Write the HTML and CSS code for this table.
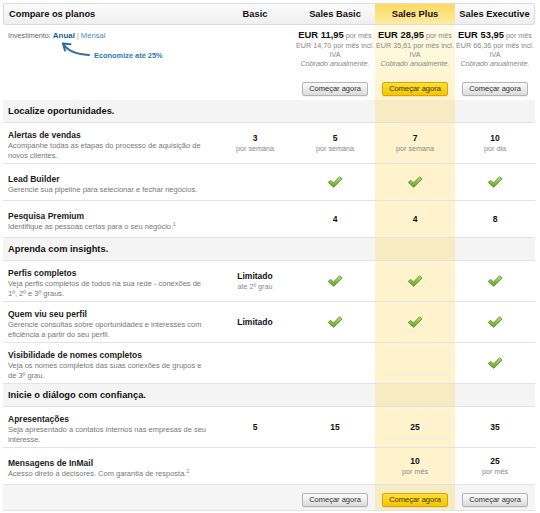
FILE: index.html
```html
<!DOCTYPE html>
<html>
<head>
<meta charset="utf-8">
<title>Compare os planos</title>
<link rel="stylesheet" href="styles.css">
</head>
<body>
<table class="plans">
  <colgroup>
    <col class="col-feature">
    <col class="col-plan">
    <col class="col-plan">
    <col class="col-plan">
    <col class="col-plan">
  </colgroup>
  <thead>
    <tr class="head-row">
      <th class="feature-head">Compare os planos</th>
      <th>Basic</th>
      <th>Sales Basic</th>
      <th class="featured">Sales Plus</th>
      <th class="last">Sales Executive</th>
    </tr>
  </thead>
  <tbody>
    <tr class="price-row">
      <td class="invest">
        <div class="billing">Investimento: <a class="current">Anual</a> <span class="sep">|</span> <a>Mensal</a></div>
        <div class="saving">
          <svg class="arrow" width="36" height="18" viewBox="0 0 36 18"><path d="M5 2.5 Q11 13 31 14" fill="none" stroke="#2b6ea6" stroke-width="2" stroke-linecap="round"/><path d="M12.5 3.2 L5 2.5 L7 9.5" fill="none" stroke="#2b6ea6" stroke-width="2" stroke-linecap="round" stroke-linejoin="round"/></svg>
          <span>Economize até 25%</span>
        </div>
      </td>
      <td></td>
      <td>
        <div class="price"><strong>EUR 11,95</strong> por mês</div>
        <div class="tax">EUR 14,70 por mês incl.<br>IVA</div>
        <div class="billed">Cobrado anualmente.</div>
        <button class="btn">Começar agora</button>
      </td>
      <td class="featured">
        <div class="price"><strong>EUR 28,95</strong> por mês</div>
        <div class="tax">EUR 35,61 por mês incl.<br>IVA</div>
        <div class="billed">Cobrado anualmente.</div>
        <button class="btn btn-primary">Começar agora</button>
      </td>
      <td>
        <div class="price"><strong>EUR 53,95</strong> por mês</div>
        <div class="tax">EUR 66,36 por mês incl.<br>IVA</div>
        <div class="billed">Cobrado anualmente.</div>
        <button class="btn">Começar agora</button>
      </td>
    </tr>

    <tr class="section">
      <td>Localize oportunidades.</td><td></td><td></td><td class="featured"></td><td></td>
    </tr>
    <tr class="feature">
      <td class="name">
        <div class="title">Alertas de vendas</div>
        <div class="desc">Acompanhe todas as etapas do processo de aquisição de<br>novos clientes.</div>
      </td>
      <td><div class="value">3</div><div class="unit">por semana</div></td>
      <td><div class="value">5</div><div class="unit">por semana</div></td>
      <td class="featured"><div class="value">7</div><div class="unit">por semana</div></td>
      <td><div class="value">10</div><div class="unit">por dia</div></td>
    </tr>
    <tr class="feature">
      <td class="name">
        <div class="title">Lead Builder</div>
        <div class="desc">Gerencie sua pipeline para selecionar e fechar negócios.</div>
      </td>
      <td></td>
      <td><svg class="check"><use href="#check"/></svg></td>
      <td class="featured"><svg class="check"><use href="#check"/></svg></td>
      <td><svg class="check"><use href="#check"/></svg></td>
    </tr>
    <tr class="feature">
      <td class="name">
        <div class="title">Pesquisa Premium</div>
        <div class="desc">Identifique as pessoas certas para o seu negócio.<sup>1</sup></div>
      </td>
      <td></td>
      <td><div class="value">4</div></td>
      <td class="featured"><div class="value">4</div></td>
      <td><div class="value">8</div></td>
    </tr>

    <tr class="section">
      <td>Aprenda com insights.</td><td></td><td></td><td class="featured"></td><td></td>
    </tr>
    <tr class="feature">
      <td class="name">
        <div class="title">Perfis completos</div>
        <div class="desc">Veja perfis completos de todos na sua rede - conexões de<br>1º, 2º e 3º graus.</div>
      </td>
      <td><div class="value">Limitado</div><div class="unit">até 2º grau</div></td>
      <td><svg class="check"><use href="#check"/></svg></td>
      <td class="featured"><svg class="check"><use href="#check"/></svg></td>
      <td><svg class="check"><use href="#check"/></svg></td>
    </tr>
    <tr class="feature">
      <td class="name">
        <div class="title">Quem viu seu perfil</div>
        <div class="desc">Gerencie consultas sobre oportunidades e interesses com<br>eficiência a partir do seu perfil.</div>
      </td>
      <td><div class="value">Limitado</div></td>
      <td><svg class="check"><use href="#check"/></svg></td>
      <td class="featured"><svg class="check"><use href="#check"/></svg></td>
      <td><svg class="check"><use href="#check"/></svg></td>
    </tr>
    <tr class="feature">
      <td class="name">
        <div class="title">Visibilidade de nomes completos</div>
        <div class="desc">Veja os nomes completos das suas conexões de grupos e<br>de 3º grau.</div>
      </td>
      <td></td>
      <td></td>
      <td class="featured"></td>
      <td><svg class="check"><use href="#check"/></svg></td>
    </tr>

    <tr class="section">
      <td>Inicie o diálogo com confiança.</td><td></td><td></td><td class="featured"></td><td></td>
    </tr>
    <tr class="feature">
      <td class="name">
        <div class="title">Apresentações</div>
        <div class="desc">Seja apresentado a contatos internos nas empresas de seu<br>interesse.</div>
      </td>
      <td><div class="value">5</div></td>
      <td><div class="value">15</div></td>
      <td class="featured"><div class="value">25</div></td>
      <td><div class="value">35</div></td>
    </tr>
    <tr class="feature">
      <td class="name">
        <div class="title">Mensagens de InMail</div>
        <div class="desc">Acesso direto a decisores. Com garantia de resposta.<sup>2</sup></div>
      </td>
      <td></td>
      <td></td>
      <td class="featured"><div class="value">10</div><div class="unit">por mês</div></td>
      <td><div class="value">25</div><div class="unit">por mês</div></td>
    </tr>

    <tr class="footer-row">
      <td></td>
      <td></td>
      <td><button class="btn">Começar agora</button></td>
      <td class="featured"><button class="btn btn-primary">Começar agora</button></td>
      <td><button class="btn">Começar agora</button></td>
    </tr>
  </tbody>
</table>

<svg class="sprite" width="0" height="0">
  <defs>
    <linearGradient id="checkFill" x1="0" y1="0" x2="0" y2="1">
      <stop offset="0" stop-color="#b8e56c"/>
      <stop offset="1" stop-color="#5fa322"/>
    </linearGradient>
    <symbol id="check" viewBox="0 0 16 12">
      <path d="M1.2 6.4 L3.9 4.4 L6.4 7.1 L12.6 0.8 L15 3 L6.7 11.3 Z" fill="url(#checkFill)" stroke="#4b8a1d" stroke-width="0.8" stroke-linejoin="round"/>
    </symbol>
  </defs>
</svg>
</body>
</html>
```

FILE: styles.css
```css
* {
  margin: 0;
  padding: 0;
  box-sizing: border-box;
}
body {
  margin: 3px;
  font-family: "Liberation Sans", Arial, sans-serif;
  color: #222;
  background: #fff;
}
.plans {
  width: 532px;
  border-collapse: separate;
  border-spacing: 0;
  table-layout: fixed;
}
.col-feature {
  width: 212px;
}
.col-plan {
  width: 80px;
}

/* header */
.head-row th {
  height: 22px;
  font-size: 9.3px;
  font-weight: bold;
  color: #111;
  text-align: center;
  white-space: nowrap;
  background: linear-gradient(#fbfbfb, #efefef);
  border-top: 1px solid #dcdcdc;
  border-bottom: 1px solid #dcdcdc;
}
.head-row th.feature-head {
  text-align: left;
  padding-left: 5px;
  border-left: 1px solid #dcdcdc;
  border-radius: 3px 0 0 3px;
}
.head-row th.last {
  border-right: 1px solid #dcdcdc;
  border-radius: 0 3px 3px 0;
}
.head-row th.featured {
  background: linear-gradient(#fcd95e, #fdeba4);
}

/* pricing */
.price-row td {
  height: 75px;
  vertical-align: top;
  text-align: center;
  padding-top: 4px;
  color: #888;
  font-size: 7.2px;
}
.price-row td.featured {
  background: linear-gradient(#fffae4, #fff3cd);
}
.price {
  line-height: 11px;
  white-space: nowrap;
}
.price strong {
  font-size: 9.4px;
  color: #111;
}
.tax {
  line-height: 9px;
  white-space: nowrap;
}
.billed {
  line-height: 9px;
  font-style: italic;
}
.price-row .btn {
  margin-top: 14px;
}
.invest {
  text-align: left !important;
  padding-left: 5px;
}
.billing {
  line-height: 11px;
  padding-top: 1px;
  color: #666;
  white-space: nowrap;
}
.billing a {
  color: #4a88c0;
  font-size: 7.6px;
}
.billing a.current {
  color: #1c5f95;
  font-weight: bold;
  font-size: 8px;
}
.billing .sep {
  color: #999;
}
.saving {
  display: flex;
  align-items: flex-end;
  padding-left: 50px;
  margin-top: 0;
}
.saving span {
  font-size: 7.4px;
  line-height: 10px;
  font-weight: bold;
  color: #2a78b5;
  white-space: nowrap;
  margin-bottom: -2px;
}

/* buttons */
.btn {
  display: inline-block;
  height: 14px;
  padding: 0 6px;
  font-family: "Liberation Sans", Arial, sans-serif;
  font-size: 7.5px;
  line-height: 12px;
  color: #333;
  background: linear-gradient(#fbfbfb, #dcdcdc);
  border: 1px solid #b4b4b4;
  border-radius: 2px;
  box-shadow: 0 1px 0 rgba(0, 0, 0, 0.06);
  cursor: pointer;
  white-space: nowrap;
}
.btn-primary {
  background: linear-gradient(#ffdf3a, #f6c500);
  border-color: #d5a700;
  color: #3a3000;
}

/* section bars */
.section td {
  height: 23px;
  background: #f4f4f4;
  border-bottom: 1px solid #e2e2e2;
  font-size: 9.3px;
  font-weight: bold;
  color: #111;
  padding-left: 5px;
  white-space: nowrap;
}
.section td.featured {
  background: #f7ebc4;
}

/* feature rows */
.feature td {
  height: 37px;
  border-bottom: 1px solid #e3e3e3;
  text-align: center;
  vertical-align: middle;
}
.feature td.featured {
  background: #fff3cd;
}
.feature td.name {
  text-align: left;
  padding: 6px 0 2px 5px;
}
.title {
  font-size: 8.5px;
  font-weight: bold;
  line-height: 12px;
  color: #222;
  white-space: nowrap;
}
.desc {
  font-size: 7.5px;
  line-height: 10px;
  color: #777;
  white-space: nowrap;
}
.desc sup {
  font-size: 5px;
  line-height: 0;
  vertical-align: 3px;
}
.value {
  font-size: 8.5px;
  font-weight: bold;
  line-height: 11px;
  color: #111;
}
.unit {
  font-size: 7.2px;
  line-height: 9px;
  color: #888;
}
.check {
  display: block;
  width: 16px;
  height: 12px;
  margin: 0 auto;
}

/* footer */
.footer-row td {
  height: 26px;
  background: #f5f5f5;
  border-bottom: 1px solid #e3e3e3;
  text-align: center;
  vertical-align: middle;
}
.footer-row td.featured {
  background: #f7ebc4;
}

.sprite {
  position: absolute;
  width: 0;
  height: 0;
  overflow: hidden;
}
```
